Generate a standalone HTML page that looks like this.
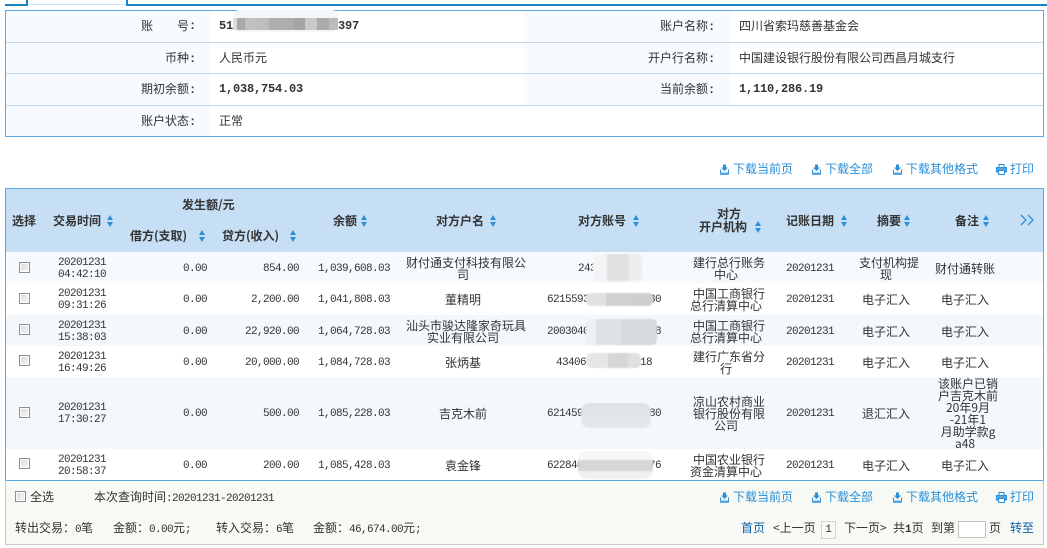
<!DOCTYPE html>
<html lang="zh"><head><meta charset="utf-8"><title>账户明细</title>
<style>
*{box-sizing:border-box}
html,body{margin:0;padding:0;background:#fff}
body{width:1047px;height:548px;position:relative;overflow:hidden;font:12px/12px "WenQuanYi Zen Hei","Noto Sans CJK SC",sans-serif;color:#333}
.a{position:absolute}
.t{position:absolute;white-space:nowrap;line-height:12px;height:12px}
.r{text-align:right}
.n{font-family:"Liberation Mono",monospace;font-size:11px;letter-spacing:-.6px}
.b{font-family:"Liberation Mono",monospace;font-size:12px;font-weight:bold;letter-spacing:-.2px}
.co{font-family:"Liberation Mono",monospace;font-size:12px;font-weight:bold;letter-spacing:-1.2px}
.lk{color:#2a8fd6}
.dk{color:#0b5ea8}
.h{font-weight:bold;color:#333}
.row{position:absolute;left:6px;width:1037px}
.c{position:absolute;top:0;bottom:0;display:flex;align-items:center;justify-content:center;text-align:center;line-height:12px;white-space:nowrap;transform:translateY(1px)}
.c>div{display:block}
.e{justify-content:flex-end}
.o{display:inline-block;padding-left:6px}
.time{left:46px;width:60px}.deb{left:100px;width:101px}.cre{left:210px;width:83px}.bal{left:300px;width:84px}
.name{left:392px;width:130px}.acc{left:533px;width:130px}.inst{left:682px;width:76px}.date{left:772px;width:64px}.sum{left:848px;width:64px}.note{left:927px;width:64px}
.cb{position:absolute;width:11px;height:11px;border:1px solid #8f8f8f;background:linear-gradient(135deg,#dcdcdc,#f6f6f6);box-shadow:inset 0 0 0 1px #fff}
.blur{position:absolute;filter:blur(.4px);border-radius:5px}
svg{position:absolute;display:block}
</style></head><body>
<svg width="0" height="0" style="left:0;top:0"><defs>
<symbol id="dl" viewBox="0 0 11 11"><path d="M4 0.5H7V3.5H9L5.5 7 2 3.5H4Z" fill="#2a8fd6"/><path d="M1.5 5.5V10.5H9.5V5.5" fill="none" stroke="#2a8fd6"/><path d="M1 8.5H10V11H1Z" fill="#5aa6de"/></symbol>
<symbol id="pr" viewBox="0 0 11 11"><path d="M3 .5H8V3.5H3Z" fill="none" stroke="#2a8fd6"/><path d="M.5 3.5H10.5V8H.5Z" fill="#5aa6de" stroke="#2a8fd6"/><path d="M2.5 6.5H8.5V10.5H2.5Z" fill="#fff" stroke="#2a8fd6"/></symbol>
<symbol id="ar" viewBox="0 0 6 12"><path d="M3 0 6 5H0ZM0 7H6L3 12Z" fill="#2a8fd6"/></symbol>
</defs></svg>

<!-- tabs -->
<div class="a" style="left:5px;top:4px;width:1042px;height:2px;background:#1a82c8"></div>
<div class="a" style="left:26px;top:0;width:102px;height:6px;background:#fff;border-left:2px solid #1a82c8;border-right:2px solid #1a82c8"></div>
<div class="a" style="left:28px;top:4px;width:98px;height:1px;background:#cde4f5"></div>

<!-- info box -->
<div class="a" style="left:5px;top:10px;width:1039px;height:127px;border:1px solid #5ba8e5;background:#fff"></div>
<div class="a" style="left:6px;top:11px;width:204px;height:125px;background:#f7fbff"></div>
<div class="a" style="left:524px;top:11px;width:206px;height:94px;background:#f7fbff"></div>
<div class="a" style="left:6px;top:42px;width:1037px;height:1px;background:#c5d7ea"></div>
<div class="a" style="left:6px;top:73px;width:1037px;height:1px;background:#c5d7ea"></div>
<div class="a" style="left:6px;top:105px;width:1037px;height:1px;background:#c5d7ea"></div>

<span class="t" style="left:141px;top:20px">账</span><span class="t" style="left:177px;top:20px">号</span><span class="t co" style="left:189px;top:20px">:</span>
<span class="t r" style="left:95px;width:100px;top:52px">币种<span class="co">:</span></span>
<span class="t r" style="left:95px;width:100px;top:83px">期初余额<span class="co">:</span></span>
<span class="t r" style="left:95px;width:100px;top:115px">账户状态<span class="co">:</span></span>
<span class="t b" style="left:219px;top:20px">51</span><span class="t b" style="left:338px;top:20px">397</span>
<div class="a" style="left:233px;top:10px;width:105px;height:22px;background:#f2f7fc;border-radius:6px"></div>
<div class="a" style="left:233px;top:18px;width:105px;height:12px;background:linear-gradient(90deg,#ddd 0 4px,#aaa 4px 12px,#c0c0c0 12px 24px,#bdbdbd 24px 36px,#adadad 36px 60px,#a6a6a6 60px 72px,#c8c8c8 72px 84px,#aaa 84px 96px,#bbb 96px 105px)"></div>
<span class="t" style="left:219px;top:52px">人民币元</span>
<span class="t b" style="left:219px;top:83px">1,038,754.03</span>
<span class="t" style="left:219px;top:115px">正常</span>

<span class="t r" style="left:614px;width:100px;top:20px">账户名称<span class="co">:</span></span>
<span class="t r" style="left:614px;width:100px;top:52px">开户行名称<span class="co">:</span></span>
<span class="t r" style="left:614px;width:100px;top:83px">当前余额<span class="co">:</span></span>
<span class="t" style="left:739px;top:20px">四川省索玛慈善基金会</span>
<span class="t" style="left:739px;top:52px">中国建设银行股份有限公司西昌月城支行</span>
<span class="t b" style="left:739px;top:83px">1,110,286.19</span>

<!-- toolbar top -->
<svg style="left:719px;top:164px" width="11" height="11"><use href="#dl"/></svg><span class="t lk" style="left:733px;top:163px">下载当前页</span>
<svg style="left:811px;top:164px" width="11" height="11"><use href="#dl"/></svg><span class="t lk" style="left:825px;top:163px">下载全部</span>
<svg style="left:892px;top:164px" width="11" height="11"><use href="#dl"/></svg><span class="t lk" style="left:906px;top:163px">下载其他格式</span>
<svg style="left:996px;top:164px" width="11" height="11"><use href="#pr"/></svg><span class="t lk" style="left:1010px;top:163px">打印</span>

<!-- table header -->
<div class="a" style="left:5px;top:188px;width:1039px;height:293px;border:1px solid #5ba8e5;border-bottom:0"></div>
<div class="a" style="left:6px;top:189px;width:1037px;height:63px;background:#c6dff5"></div>
<span class="t h" style="left:12px;top:215px">选择</span>
<span class="t h" style="left:53px;top:215px">交易时间</span><svg style="left:107px;top:215px" width="6" height="12"><use href="#ar"/></svg>
<span class="t h" style="left:182px;top:199px">发生额/元</span>
<span class="t h" style="left:130px;top:230px">借方(支取)</span><svg style="left:199px;top:230px" width="6" height="12"><use href="#ar"/></svg>
<span class="t h" style="left:222px;top:230px">贷方(收入)</span><svg style="left:290px;top:230px" width="6" height="12"><use href="#ar"/></svg>
<span class="t h" style="left:333px;top:215px">余额</span><svg style="left:361px;top:215px" width="6" height="12"><use href="#ar"/></svg>
<span class="t h" style="left:436px;top:215px">对方户名</span><svg style="left:490px;top:215px" width="6" height="12"><use href="#ar"/></svg>
<span class="t h" style="left:578px;top:215px">对方账号</span><svg style="left:633px;top:215px" width="6" height="12"><use href="#ar"/></svg>
<span class="t h" style="left:717px;top:208px">对方</span>
<span class="t h" style="left:699px;top:221px">开户机构</span><svg style="left:755px;top:221px" width="6" height="12"><use href="#ar"/></svg>
<span class="t h" style="left:786px;top:215px">记账日期</span><svg style="left:841px;top:215px" width="6" height="12"><use href="#ar"/></svg>
<span class="t h" style="left:877px;top:215px">摘要</span><svg style="left:904px;top:215px" width="6" height="12"><use href="#ar"/></svg>
<span class="t h" style="left:955px;top:215px">备注</span><svg style="left:983px;top:215px" width="6" height="12"><use href="#ar"/></svg>
<svg style="left:1020px;top:214px" width="14" height="12"><path d="M1 1 6 6 1 11M8 1 13 6 8 11" fill="none" stroke="#2a8fd6" stroke-width="1.3"/></svg>

<!-- rows -->
<div class="row" style="top:252px;height:31px;background:#f6fafe">
<i class="cb" style="left:13px;top:10px"></i><div class="c time n">20201231<br>04:42:10</div><div class="c deb e n">0.00</div><div class="c cre e n">854.00</div><div class="c bal e n">1,039,608.03</div>
<div class="c name"><div><span class="o">财付通支付科技有限公</span><br>司</div></div><div class="c acc"><span class="n" style="margin-right:34px">243</span></div><div class="c inst"><div><span class="o">建行总行账务</span><br>中心</div></div><div class="c date n">20201231</div><div class="c sum"><div><span class="o">支付机构提</span><br>现</div></div><div class="c note">财付通转账</div>
</div>
<div class="blur" style="left:593px;top:254px;width:49px;height:27px;background:linear-gradient(90deg,#f3f4f6 0 14px,#e0e0e2 14px 36px,#eeeeef 36px)"></div>

<div class="row" style="top:283px;height:32px;background:#fff">
<i class="cb" style="left:13px;top:10px"></i><div class="c time n">20201231<br>09:31:26</div><div class="c deb e n">0.00</div><div class="c cre e n">2,200.00</div><div class="c bal e n">1,041,808.03</div>
<div class="c name">董精明</div><div class="c acc n">6215593000000000080</div><div class="c inst"><div><span class="o">中国工商银行</span><br>总行清算中心</div></div><div class="c date n">20201231</div><div class="c sum">电子汇入</div><div class="c note">电子汇入</div>
</div>
<div class="blur" style="left:586px;top:293px;width:67px;height:13px;background:linear-gradient(90deg,#e2e2e2 0 20px,#d0d0d0 20px 45px,#cfcfcf 45px)"></div>

<div class="row" style="top:315px;height:31px;background:#f3f8fd">
<i class="cb" style="left:13px;top:9px"></i><div class="c time n">20201231<br>15:38:03</div><div class="c deb e n">0.00</div><div class="c cre e n">22,920.00</div><div class="c bal e n">1,064,728.03</div>
<div class="c name"><div><span class="o">汕头市骏达隆家奇玩具</span><br>实业有限公司</div></div><div class="c acc n">2003040000000000008</div><div class="c inst"><div><span class="o">中国工商银行</span><br>总行清算中心</div></div><div class="c date n">20201231</div><div class="c sum">电子汇入</div><div class="c note">电子汇入</div>
</div>
<div class="blur" style="left:586px;top:319px;width:71px;height:26px;background:linear-gradient(90deg,#eef0f2 0 10px,#dfe3e6 10px 35px,#d7dbde 35px)"></div>

<div class="row" style="top:346px;height:31px;background:#fff">
<i class="cb" style="left:13px;top:9px"></i><div class="c time n">20201231<br>16:49:26</div><div class="c deb e n">0.00</div><div class="c cre e n">20,000.00</div><div class="c bal e n">1,084,728.03</div>
<div class="c name">张炳基</div><div class="c acc n">4340600000000018</div><div class="c inst"><div><span class="o">建行广东省分</span><br>行</div></div><div class="c date n">20201231</div><div class="c sum">电子汇入</div><div class="c note">电子汇入</div>
</div>
<div class="blur" style="left:586px;top:353px;width:55px;height:15px;background:linear-gradient(90deg,#e6e6e6 0 22px,#d6d6d6 22px 42px,#e0e0e0 42px)"></div>

<div class="row" style="top:377px;height:72px;background:#f3f8fd">
<i class="cb" style="left:13px;top:30px"></i><div class="c time n">20201231<br>17:30:27</div><div class="c deb e n">0.00</div><div class="c cre e n">500.00</div><div class="c bal e n">1,085,228.03</div>
<div class="c name">吉克木前</div><div class="c acc n">6214590000000000080</div><div class="c inst"><div><span class="o">凉山农村商业</span><br><span class="o">银行股份有限</span><br>公司</div></div><div class="c date n">20201231</div><div class="c sum">退汇汇入</div><div class="c note"><div><span class="o">该账户已销</span><br><span class="o">户吉克木前</span><br><span class="o">20年9月</span><br><span class="o">-21年1</span><br><span class="o">月助学款g</span><br>a48</div></div>
</div>
<div class="blur" style="left:581px;top:403px;width:70px;height:25px;background:linear-gradient(#dfe3e7,#e4e8ec);border-radius:8px"></div>

<div class="row" style="top:449px;height:31px;background:#fff">
<i class="cb" style="left:13px;top:9px"></i><div class="c time n">20201231<br>20:58:37</div><div class="c deb e n">0.00</div><div class="c cre e n">200.00</div><div class="c bal e n">1,085,428.03</div>
<div class="c name">袁金锋</div><div class="c acc n">6228400000000000076</div><div class="c inst"><div><span class="o">中国农业银行</span><br>资金清算中心</div></div><div class="c date n">20201231</div><div class="c sum">电子汇入</div><div class="c note">电子汇入</div>
</div>
<div class="blur" style="left:578px;top:451px;width:75px;height:28px;background:linear-gradient(#f6f6f6 0 9px,#d6d6d6 9px 20px,#f0f0f0 20px);border-radius:9px"></div>

<!-- footer -->
<div class="a" style="left:5px;top:480px;width:1039px;height:65px;background:#f7f9f5;border:1px solid #c8c8c8;border-top:1px solid #5ba8e5"></div>
<i class="cb" style="left:15px;top:491px"></i>
<span class="t" style="left:30px;top:491px">全选</span>
<span class="t" style="left:94px;top:491px">本次查询时间<span class="n">:20201231-20201231</span></span>
<span class="t" style="left:15px;top:522px">转出交易：<span class="n">0</span>笔</span>
<span class="t" style="left:113px;top:522px">金额：<span class="n">0.00</span>元<span class="n">;</span></span>
<span class="t" style="left:216px;top:522px">转入交易：<span class="n">6</span>笔</span>
<span class="t" style="left:313px;top:522px">金额：<span class="n">46,674.00</span>元<span class="n">;</span></span>

<svg style="left:719px;top:492px" width="11" height="11"><use href="#dl"/></svg><span class="t lk" style="left:733px;top:491px">下载当前页</span>
<svg style="left:811px;top:492px" width="11" height="11"><use href="#dl"/></svg><span class="t lk" style="left:825px;top:491px">下载全部</span>
<svg style="left:892px;top:492px" width="11" height="11"><use href="#dl"/></svg><span class="t lk" style="left:906px;top:491px">下载其他格式</span>
<svg style="left:996px;top:492px" width="11" height="11"><use href="#pr"/></svg><span class="t lk" style="left:1010px;top:491px">打印</span>

<span class="t dk" style="left:741px;top:522px">首页</span>
<span class="t" style="left:773px;top:522px">&lt;上一页</span>
<div class="a" style="left:821px;top:521px;width:15px;height:18px;border:1px solid #d5d5d0;text-align:center;line-height:16px;font-family:'Liberation Mono',monospace;font-size:11px">1</div>
<span class="t" style="left:844px;top:522px">下一页&gt;</span>
<span class="t" style="left:893px;top:522px">共<b class="n" style="letter-spacing:0">1</b>页</span>
<span class="t" style="left:931px;top:522px">到第</span>
<div class="a" style="left:958px;top:521px;width:28px;height:17px;background:#fff;border:1px solid #c0c0c0"></div>
<span class="t" style="left:989px;top:522px">页</span>
<span class="t dk" style="left:1010px;top:522px">转至</span>
</body></html>
